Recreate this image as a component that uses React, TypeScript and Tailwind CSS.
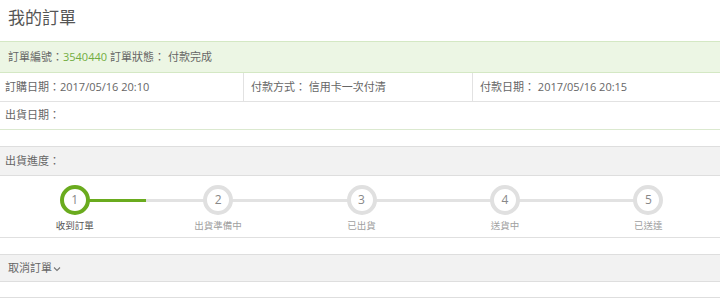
import React from "react";

const steps = ["收到訂單", "出貨準備中", "已出貨", "送貨中", "已送達"];

export default function App() {
  const font = { fontFamily: '"Open Sans","Noto Sans CJK TC",sans-serif' };
  return (
    <div className="w-[720px] h-[301px] bg-white text-[11px] text-[#666] overflow-hidden" style={font}>
      <div className="h-[41px] flex items-center pl-[8px] pb-[6px] text-[17px] text-[#555]">我的訂單</div>
      <div className="h-[32px] flex items-center pl-[8px] bg-[#ecf6e4] border-y border-[#d4e8c4]">
        <span>訂單編號：</span>
        <span className="text-[#72ad42]">3540440</span>
        <span className="ml-[3px]">訂單狀態： 付款完成</span>
      </div>
      <div className="h-[29px] flex border-b border-[#e2e2e2]">
        <div className="w-[243px] flex items-center pl-[5px]">訂購日期：2017/05/16 20:10</div>
        <div className="w-[229px] flex items-center pl-[7px] border-l border-[#e2e2e2]">付款方式： 信用卡一次付清</div>
        <div className="flex-1 flex items-center pl-[7px] border-l border-[#e2e2e2]">付款日期： 2017/05/16 20:15</div>
      </div>
      <div className="h-[28px] flex items-center pl-[5px] border-b border-[#dbe9cf]">出貨日期：</div>
      <div className="h-[16px]" />
      <div className="h-[30px] flex items-center pl-[5px] bg-[#f2f2f2] border-y border-[#dedede]">出貨進度：</div>
      <div className="h-[62px] flex pl-[3px] border-b border-[#e0e0e0]">
        {steps.map((s, i) => {
          const active = i === 0;
          return (
            <div key={s} className="flex-1 flex flex-col items-center pt-[9px] relative">
              <div className="absolute top-[23px] left-0 right-0 flex">
                <div className={`w-1/2 h-[3px] ${i === 0 ? "" : "bg-[#e2e2e2]"}`} />
                <div className={`w-1/2 h-[3px] ${i === 4 ? "" : active ? "bg-[#6aab1e]" : "bg-[#e2e2e2]"}`} />
              </div>
              <div
                className={`relative w-[30px] h-[30px] rounded-full bg-white flex items-center justify-center text-[12px] text-[#888] border-[4px] ${
                  active ? "border-[#6aab1e]" : "border-[#e0e0e0]"
                }`}
              >
                {i + 1}
              </div>
              <div className={`mt-[5px] text-[9.5px] leading-[11px] ${active ? "text-[#555]" : "text-[#a0a0a0]"}`}>{s}</div>
            </div>
          );
        })}
      </div>
      <div className="h-[16px]" />
      <div className="h-[28px] flex items-center pl-[8px] bg-[#f2f2f2] border-y border-[#dedede]">
        <span>取消訂單</span>
        <svg width="8" height="6" viewBox="0 0 8 6" className="ml-[1px] mt-[1px]">
          <path d="M1 1.5 L4 4.5 L7 1.5" fill="none" stroke="#777" strokeWidth="1.1" />
        </svg>
      </div>
      <div className="h-[16px] border-b border-[#dedede]" />
    </div>
  );
}
